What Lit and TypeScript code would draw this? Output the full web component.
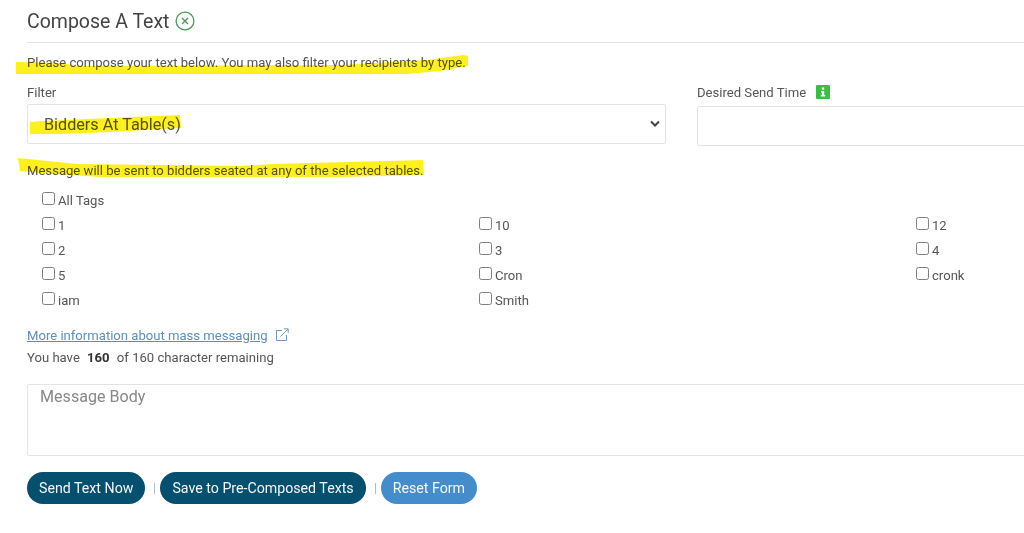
import {LitElement, html, css} from 'lit'
import {customElement} from 'lit/decorators.js'

const TAG_ROWS = [
    ['1', '10', '12'],
    ['2', '3', '4'],
    ['5', 'Cron', 'cronk'],
    ['iam', 'Smith'],
]

@customElement('app-root')
export class AppRoot extends LitElement {
    static styles = css`
        :host {
            display: block;
            position: relative;
            width: 1024px;
            height: 533px;
            overflow: hidden;
            background: #fff;
            color: #555;
            font-family: Roboto, "Liberation Sans", sans-serif;
            font-size: 13.1px;
        }

        .page {
            width: 1060px;
            padding: 8px 0 0 27px;
            box-sizing: border-box;
        }

        .title {
            display: flex;
            align-items: center;
            gap: 5px;
            height: 26px;
            margin: 0;
            font-size: 19.5px;
            font-weight: 400;
            color: #444;
        }

        .title svg { display: block; }

        hr {
            margin: 8px 0 0;
            border: 0;
            border-top: 1px solid #e3e3e3;
        }

        .intro {
            margin: 12px 0 0;
            line-height: 16px;
        }

        .fields {
            display: flex;
            gap: 31px;
            margin-top: 13px;
        }

        .field-filter { width: 639px; }
        .field-time { flex: 1; }

        .label {
            display: flex;
            align-items: center;
            gap: 10px;
            height: 16px;
        }

        .info {
            display: flex;
            align-items: center;
            justify-content: center;
            width: 14px;
            height: 14px;
            border-radius: 1px;
            background: #37c13f;
        }

        .select {
            display: flex;
            align-items: center;
            justify-content: space-between;
            box-sizing: border-box;
            height: 40px;
            margin-top: 4px;
            padding: 0 4px 0 16px;
            border: 1px solid #e3e3e3;
            border-radius: 2px;
            font-size: 16.2px;
            color: #555;
        }

        .time-input {
            box-sizing: border-box;
            height: 40px;
            margin-top: 6px;
            border: 1px solid #e3e3e3;
            border-radius: 2px;
        }

        .hint {
            margin: 17px 0 0;
            line-height: 16px;
        }

        .tags {
            display: grid;
            grid-template-columns: repeat(3, 437px);
            grid-auto-rows: 25px;
            margin: 9px 0 0 15px;
        }

        .all-tags { grid-column: 1 / -1; }

        .tag {
            display: flex;
            align-items: center;
            gap: 3px;
            height: 25px;
        }

        .box {
            box-sizing: border-box;
            width: 13px;
            height: 13px;
            margin-top: -5px;
            border: 1px solid #808080;
            border-radius: 2.5px;
            background: #fff;
        }

        .more {
            display: flex;
            align-items: center;
            gap: 7px;
            margin-top: 14px;
            height: 16px;
        }

        .more a {
            color: #5b8fc0;
            text-decoration: underline;
        }

        .remaining {
            margin: 7px 0 0;
            line-height: 16px;
        }

        .remaining b {
            margin: 0 4px;
            color: #333;
            font-weight: 700;
        }

        .body {
            box-sizing: border-box;
            height: 72px;
            margin-top: 18px;
            padding: 2px 12px;
            border: 1px solid #e3e3e3;
            border-radius: 2px;
            font-size: 16.1px;
            line-height: 20px;
            color: #888;
        }

        .actions {
            display: flex;
            align-items: center;
            margin-top: 16px;
        }

        .btn {
            height: 32px;
            padding: 0 12px;
            border: 0;
            border-radius: 16px;
            background: #05506f;
            color: #f4f7f9;
            font-family: inherit;
            font-size: 14.2px;
        }

        .btn-light { background: #448ccb; }

        .sep {
            width: 1px;
            height: 11px;
            margin: 0 5px 0 9px;
            background: #bbb;
        }

        .marker {
            position: absolute;
            inset: 0;
            mix-blend-mode: multiply;
            pointer-events: none;
        }
    `

    protected render(): unknown {
        return html`
            <div class="page">
                <h1 class="title">
                    Compose A Text
                    <svg width="20" height="20" viewBox="0 0 20 20" fill="none" stroke="#4c9a5a">
                        <circle cx="10" cy="10" r="8.9" stroke-width="1.3"></circle>
                        <path d="M7 7l6 6M13 7l-6 6" stroke-width="1.4"></path>
                    </svg>
                </h1>
                <hr />
                <p class="intro">Please compose your text below. You may also filter your recipients by type.</p>

                <div class="fields">
                    <div class="field-filter">
                        <div class="label">Filter</div>
                        <div class="select">
                            Bidders At Table(s)
                            <svg width="12" height="8" viewBox="0 0 12 8" fill="none" stroke="#444" stroke-width="2">
                                <path d="M2 1.5l4 4 4-4"></path>
                            </svg>
                        </div>
                    </div>
                    <div class="field-time">
                        <div class="label">
                            Desired Send Time
                            <span class="info">
                                <svg width="6" height="10" viewBox="0 0 6 10" fill="#fff">
                                    <rect x="1.8" y="0.5" width="2.4" height="2.2"></rect>
                                    <path d="M1 4h3.2v4H5.2v1.5H0.8V8h1V5.4H1z"></path>
                                </svg>
                            </span>
                        </div>
                        <div class="time-input"></div>
                    </div>
                </div>

                <p class="hint">Message will be sent to bidders seated at any of the selected tables.</p>

                <div class="tags">
                    <label class="tag all-tags"><span class="box"></span>All Tags</label>
                    ${TAG_ROWS.flat().map(name => html`
                        <label class="tag"><span class="box"></span>${name}</label>
                    `)}
                </div>

                <div class="more">
                    <a href="#">More information about mass messaging</a>
                    <svg width="14" height="14" viewBox="0 0 14 14" fill="none" stroke="#6f9ac4" stroke-width="1">
                        <path d="M7 2.5H1.5v10h10V7"></path>
                        <path d="M5.5 8.5L13 1M9 .8h4.2V5"></path>
                    </svg>
                </div>
                <p class="remaining">You have <b>160</b> of 160 character remaining</p>

                <div class="body">Message Body</div>

                <div class="actions">
                    <button class="btn">Send Text Now</button>
                    <span class="sep"></span>
                    <button class="btn">Save to Pre-Composed Texts</button>
                    <span class="sep"></span>
                    <button class="btn btn-light">Reset Form</button>
                </div>
            </div>

            <svg class="marker" width="1024" height="533" viewBox="0 0 1024 533" fill="#fdf01c">
                <path d="M16 62L60 63L80 66L340 65L427 60L463 55L468 56L468 66L440 71L407 74L300 74L16 74Z"></path>
                <path d="M30 122L43 121L110 118L180 115L181 128L110 132L60 134L30 134Z"></path>
                <path d="M18 158L77 164L240 166L273 164L350 162L423 160L424 175L340 177L100 177L40 173L20 171Z"></path>
            </svg>
        `
    }
}

declare global {
    interface HTMLElementTagNameMap {
        "app-root": AppRoot;
    }
}
